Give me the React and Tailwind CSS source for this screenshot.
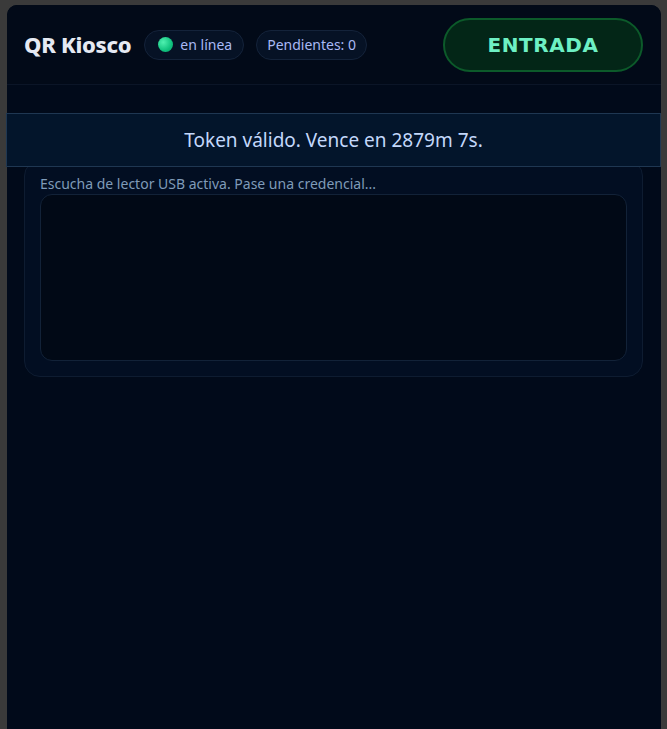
import React from "react";

export default function App() {
  const font = { fontFamily: '"Segoe UI", "Noto Sans", "Open Sans", sans-serif' };
  return (
    <div className="min-h-[729px] w-full bg-[#3a3a3a] pt-[5px] pl-[7px] pr-[6px]" style={font}>
      <div className="relative min-h-[724px] rounded-t-[10px] bg-[#010a1a]">
        {/* Header */}
        <header className="flex h-[80px] items-center justify-between border-b border-[#0b1527] bg-[#020a18] pl-[17px] pr-[18px] rounded-t-[10px]">
          <div className="flex items-center gap-3">
            <h1 className="text-[22px] font-extrabold text-[#e5e9f2] tracking-[-0.3px] mr-[1px]">QR Kiosco</h1>
            <span className="flex h-[30px] items-center gap-[7px] rounded-full border border-[#14233a] bg-[#061225] pl-[13px] pr-[11px] text-[14px] text-[#a9b9f5]">
              <span className="h-[15px] w-[15px] rounded-full bg-[radial-gradient(circle_at_35%_35%,#4ff0b0,#10c27e_60%,#0a9c66)]" />
              en línea
            </span>
            <span className="flex h-[30px] items-center rounded-full border border-[#14233a] bg-[#061225] px-[10px] text-[14px] text-[#a9b9f5]">
              Pendientes: 0
            </span>
          </div>
          <button className="flex h-[54px] w-[200px] items-center justify-center rounded-full border-2 border-[#0c5a2a] bg-[#032617] text-[20px] font-black tracking-[0.6px] text-[#6ef0c4]" style={{ fontFamily: '"DejaVu Sans", "Liberation Sans", sans-serif' }}>
            ENTRADA
          </button>
        </header>

        {/* Main */}
        <main className="pl-[17px] pr-[18px] pt-[75px]">
          <div className="rounded-[16px] border border-[#0e1c31] bg-[#020e22] px-[15px] pb-[15px] pt-[14px]">
            <p className="text-[14px] leading-[18px] text-[#7f9bb8]">Escucha de lector USB activa. Pase una credencial...</p>
            <div className="mt-[1px] h-[167px] rounded-[12px] border border-[#122238] bg-[#010916]" />
          </div>
        </main>

        {/* Toast banner overlay */}
        <div className="absolute left-[-1px] right-0 top-[108px] flex h-[54px] items-center justify-center border border-[#1f3752] bg-[#03152b] text-[19px] text-[#c3d8fb]">
          Token válido. Vence en 2879m 7s.
        </div>
      </div>
    </div>
  );
}
